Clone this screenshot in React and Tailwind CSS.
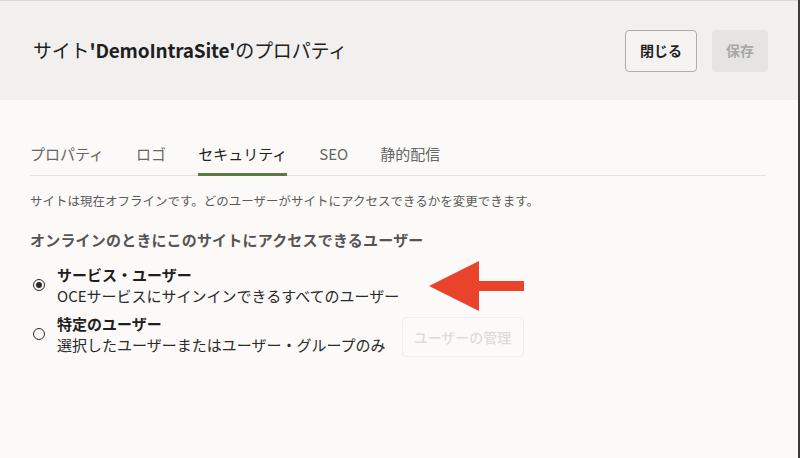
import React, { useState } from 'react';

const TABS = ['プロパティ', 'ロゴ', 'セキュリティ', 'SEO', '静的配信'];

const FONT = { fontFamily: '"Noto Sans CJK JP", "Noto Sans", sans-serif' };

const Radio = ({ checked }) => (
  <span className="flex h-[12px] w-[12px] shrink-0 items-center justify-center rounded-full border border-[#2a2a2a]">
    {checked && <span className="h-[6px] w-[6px] rounded-full bg-[#2a2a2a]" />}
  </span>
);

const App = () => {
  const [tab] = useState('セキュリティ');
  const [access] = useState('service');

  return (
    <div
      className="relative h-[458px] w-[800px] overflow-hidden border-r-2 border-[#3a3a3a] bg-[#fbfaf9] text-[#1f1f1f]"
      style={FONT}
    >
      {/* Header */}
      <div className="flex h-[100px] items-center justify-between border-t border-[#d4d9de] bg-[#f1f0ef] pl-[33px] pr-[30px]">
        <h1 className="text-[19px] font-normal tracking-[-0.2px]">
          サイト<span className="font-bold">'DemoIntraSite'</span>のプロパティ
        </h1>
        <div className="flex items-center gap-[15px]">
          <button className="h-[42px] w-[72px] rounded-[4px] border border-[#aeaeae] bg-[#f4f3f2] text-[14px] font-bold text-[#1f1f1f]">
            閉じる
          </button>
          <button disabled className="h-[42px] w-[56px] rounded-[4px] bg-[#e5e4e3] text-[14px] font-bold text-[#a8a8a8]">
            保存
          </button>
        </div>
      </div>

      {/* Body */}
      <div className="pl-[30px] pr-[32px] pt-[43px]">
        <div className="flex gap-[32px] border-b border-[#e4e3e2]">
          {TABS.map(t => (
            <div
              key={t}
              className={`-mb-px pb-[8px] text-[15px] leading-[22px] ${
                t === tab ? 'border-b-[3px] border-[#5b7a46] text-[#222]' : 'border-b-[3px] border-transparent text-[#666]'
              }`}
            >
              {t}
            </div>
          ))}
        </div>

        <p className="mt-[16px] text-[12.5px] leading-[18px] text-[#5a5a5a]">
          サイトは現在オフラインです。どのユーザーがサイトにアクセスできるかを変更できます。
        </p>

        <h2 className="mt-[20px] text-[15px] font-bold leading-[20px] tracking-[0.2px] text-[#555]">
          オンラインのときにこのサイトにアクセスできるユーザー
        </h2>

        <div className="mt-[14px] flex items-center gap-[12px] pl-[3px]">
          <Radio checked={access === 'service'} />
          <div className="text-[15px] leading-[21px]">
            <div className="font-bold text-[#1f1f1f]">サービス・ユーザー</div>
            <div className="text-[#2a2a2a]">OCEサービスにサインインできるすべてのユーザー</div>
          </div>
        </div>

        <div className="mt-[5px] flex items-center gap-[12px] pl-[3px]">
          <Radio checked={access === 'specific'} />
          <div className="text-[15px] leading-[21px]">
            <div className="font-bold text-[#1f1f1f]">特定のユーザー</div>
            <div className="text-[#2a2a2a]">選択したユーザーまたはユーザー・グループのみ</div>
          </div>
          <button
            disabled
            className="ml-[4px] mt-[6px] self-start h-[40px] w-[122px] rounded-[4px] border border-[#efeeed] text-[14px] font-medium text-[#dcdbda]"
          >
            ユーザーの管理
          </button>
        </div>
      </div>

      {/* Callout arrow */}
      <svg className="absolute left-[429px] top-[261px]" width="96" height="50" viewBox="0 0 96 50">
        <polygon points="0,25 50,0 50,20 95,20 95,30 50,30 50,50" fill="#e9432b" />
      </svg>
    </div>
  );
};

export default App;
